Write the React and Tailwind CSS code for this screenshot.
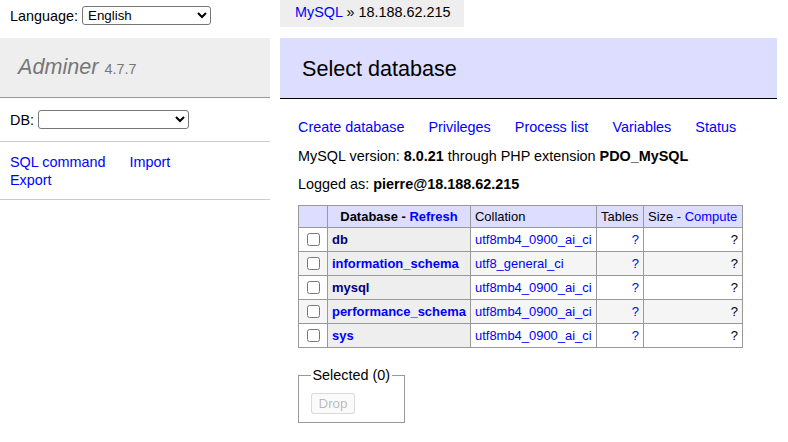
const DBS = [
  { name: 'db', coll: 'utf8mb4_0900_ai_ci', visited: true },
  { name: 'information_schema', coll: 'utf8_general_ci' },
  { name: 'mysql', coll: 'utf8mb4_0900_ai_ci', visited: true },
  { name: 'performance_schema', coll: 'utf8mb4_0900_ai_ci' },
  { name: 'sys', coll: 'utf8mb4_0900_ai_ci' },
]

const link = 'text-[#0000ff]'
const cell = 'border border-[#999] px-[4px]'

function Select({ value, width }) {
  return (
    <select
      className={`${width} h-[19px] border border-[#767676] rounded-[3px] bg-white text-[13.33px] text-black pl-[1px]`}
      defaultValue={value}
    >
      <option value={value}>{value}</option>
    </select>
  )
}

export default function App() {
  return (
    <div className="flex bg-white text-black text-[14.4px] leading-[18px] font-['Liberation_Sans',Arial,sans-serif] min-h-[442px]">
      <div className="w-[270px] shrink-0">
        <div className="h-[38px] pl-[10px] pt-[6px]">
          <div className="flex items-center h-[19px] gap-[4px]">
            <span>Language:</span>
            <Select value="English" width="w-[129px]" />
          </div>
        </div>

        <div className="h-[60px] bg-[#eee] border-b border-[#999] flex items-center pl-[18px] text-[21.6px] leading-[27px] text-[#777]">
          <span>
            <a className="italic">Adminer</a> <span className="text-[14.4px]">4.7.7</span>
          </span>
        </div>

        <div className="h-[44px] border-b border-[#ccc] flex items-center pl-[10px] gap-[4px]">
          <span>DB:</span>
          <Select value="" width="w-[151px]" />
        </div>

        <div className="h-[58px] border-b border-[#ccc] pl-[10px] pt-[11px]">
          <a className={`${link} mr-[20px]`}>SQL command</a> <a className={link}>Import</a>
          <br />
          <a className={link}>Export</a>
        </div>
      </div>

      <div className="w-[497px] ml-[10px] shrink-0">
        <div className="h-[27px] w-fit bg-[#eee] pl-[15px] pr-[14px] leading-[24px] whitespace-nowrap">
          <a className={link}>MySQL</a> » 18.188.62.215
        </div>

        <div className="mt-[11px] h-[61px] bg-[#ddf] border-b border-black flex items-center pl-[22px] text-[21.6px] leading-[27px]">
          Select database
        </div>

        <div className="pl-[18px]">
          <div className="mt-[19px] whitespace-nowrap">
            {['Create database', 'Privileges', 'Process list', 'Variables', 'Status'].map((l, i) => (
              <span key={l}>
                <a className={`${link} mr-[20px]`}>{l}</a>
                {i < 4 ? ' ' : ''}
              </span>
            ))}
          </div>
          <div className="mt-[11px]">
            MySQL version: <b>8.0.21</b> through PHP extension <b>PDO_MySQL</b>
          </div>
          <div className="mt-[10px]">
            Logged as: <b>pierre@18.188.62.215</b>
          </div>

          <table className="mt-[12px] border-collapse table-fixed w-[444px] text-[12.96px] leading-[16px]">
            <colgroup>
              <col className="w-[29px]" />
              <col className="w-[143px]" />
              <col className="w-[126px]" />
              <col className="w-[47px]" />
              <col className="w-[99px]" />
            </colgroup>
            <thead>
              <tr className="h-[22px] bg-[#ddf]">
                <td className={cell}></td>
                <th className={`${cell} text-center font-bold whitespace-nowrap`}>
                  Database - <a className={link}>Refresh</a>
                </th>
                <td className={cell}>Collation</td>
                <td className={cell}>Tables</td>
                <td className={`${cell} whitespace-nowrap`}>
                  Size - <a className={link}>Compute</a>
                </td>
              </tr>
            </thead>
            <tbody>
              {DBS.map((d, i) => {
                const bg = i % 2 ? 'bg-[#f5f5f5]' : 'bg-white'
                return (
                  <tr key={d.name} className="h-[24px]">
                    <td className={`${cell} ${bg}`}>
                      <div className="flex justify-center pl-[1px]">
                        <input type="checkbox" className="w-[13px] h-[13px]" />
                      </div>
                    </td>
                    <th className={`${cell} bg-[#eee] text-left font-bold whitespace-nowrap`}>
                      <a className={d.visited ? 'text-[#000080]' : link}>{d.name}</a>
                    </th>
                    <td className={`${cell} ${bg} whitespace-nowrap`}>
                      <a className={link}>{d.coll}</a>
                    </td>
                    <td className={`${cell} ${bg} text-right`}>
                      <a className={link}>?</a>
                    </td>
                    <td className={`${cell} ${bg} text-right`}>?</td>
                  </tr>
                )
              })}
            </tbody>
          </table>

          <fieldset className="mt-[18px] inline-block border border-[#999] px-[11.5px] pt-[9px] pb-[8px]">
            <legend className="px-[2px] leading-[18px]">Selected (0)</legend>
            <button
              disabled
              className="h-[21px] px-[7px] text-[13.33px] leading-[16px] rounded-[3px] border border-[#76767640] bg-[#efefef4d] text-[#1010104d]"
            >
              Drop
            </button>
          </fieldset>
        </div>
      </div>
    </div>
  )
}
